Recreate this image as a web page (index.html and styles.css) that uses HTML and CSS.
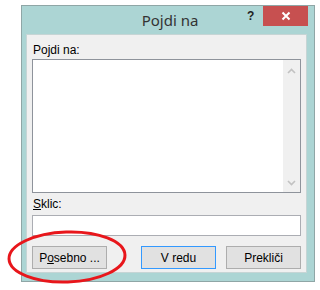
FILE: index.html
```html
<!DOCTYPE html>
<html lang="sl">
<head>
  <meta charset="UTF-8">
  <title>Pojdi na</title>
  <link rel="stylesheet" href="styles.css">
</head>
<body>
  <div class="dialog">
    <div class="titlebar">
      <span class="title">Pojdi na</span>
      <span class="help">?</span>
      <span class="close">
        <svg width="10" height="10" viewBox="0 0 10 10"><path d="M1.5 1.5 L8.5 8.5 M8.5 1.5 L1.5 8.5" stroke="#fff" stroke-width="2"/></svg>
      </span>
    </div>
    <div class="panel">
      <div class="label">Pojdi na:</div>
      <div class="listbox">
        <div class="list-area"></div>
        <div class="scrollbar">
          <svg width="9" height="6" viewBox="0 0 9 6"><path d="M1 5 L4.5 1.5 L8 5" fill="none" stroke="#c2c2c2" stroke-width="1.6"/></svg>
          <svg width="9" height="6" viewBox="0 0 9 6"><path d="M1 1 L4.5 4.5 L8 1" fill="none" stroke="#c2c2c2" stroke-width="1.6"/></svg>
        </div>
      </div>
      <div class="label label-sklic"><u>S</u>klic:</div>
      <div class="textbox"></div>
      <div class="buttons">
        <button class="btn"><span>P<u>o</u>sebno ...</span></button>
        <div class="right-buttons">
          <button class="btn btn-default">V redu</button>
          <button class="btn">Prekliči</button>
        </div>
      </div>
    </div>
  </div>
  <svg class="mark" width="130" height="62" viewBox="0 0 130 62">
    <ellipse cx="63" cy="31" rx="58" ry="25" fill="none" stroke="#e8161b" stroke-width="3" transform="rotate(-2 63 31)"/>
  </svg>
</body>
</html>
```

FILE: styles.css
```css
body {
  margin: 0;
  background: #fff;
  font-family: "Liberation Sans", Arial, sans-serif;
  font-size: 12px;
  color: #000;
  position: relative;
  width: 320px;
  height: 290px;
  overflow: hidden;
}
.dialog {
  margin: 5px 0 0 21px;
  width: 292px;
  height: 275px;
  background: #acd5d4;
  border: 1px solid #8fa6a6;
  display: flex;
  flex-direction: column;
}
.titlebar {
  height: 28px;
  position: relative;
  display: flex;
  justify-content: center;
  align-items: center;
}
.title {
  font-family: "Noto Sans", sans-serif;
  font-size: 15px;
  color: #333;
  margin-left: 4px;
  margin-top: -1px;
}
.help {
  position: absolute;
  left: 225px;
  top: 3px;
  font-weight: bold;
  font-size: 12px;
  color: #222;
}
.close {
  position: absolute;
  right: 6px;
  top: 0;
  width: 45px;
  height: 20px;
  background: #c75050;
  display: flex;
  align-items: center;
  justify-content: center;
}
.panel {
  margin: 0 7px 8px 4px;
  flex: 1;
  background: #f0f0f0;
  border: 1px solid #c6d5d5;
  padding: 7px 5px 0 5px;
  display: flex;
  flex-direction: column;
}
.label {
  line-height: 16px;
  margin-left: 1px;
  height: 17px;
}
.listbox {
  height: 132px;
  border: 1px solid #8e939b;
  background: #fff;
  display: flex;
}
.list-area {
  flex: 1;
}
.scrollbar {
  width: 17px;
  background: #f0f0f0;
  display: flex;
  flex-direction: column;
  justify-content: space-between;
  align-items: center;
  padding: 8px 0 6px;
}
.label-sklic {
  margin-top: 3px;
  height: 16px;
}
.textbox {
  height: 19px;
  margin-top: 3px;
  border: 1px solid #abadb3;
  background: #fff;
}
.buttons {
  display: flex;
  justify-content: space-between;
  margin-top: 10px;
}
.right-buttons {
  display: flex;
  gap: 10px;
}
.btn {
  width: 75px;
  height: 23px;
  border: 1px solid #adadad;
  background: #e1e1e1;
  font-family: "Liberation Sans", Arial, sans-serif;
  font-size: 12px;
  color: #000;
  padding: 0;
}
.btn-default {
  border-color: #3399ff;
}
.mark {
  position: absolute;
  left: 4px;
  top: 226px;
}
```
